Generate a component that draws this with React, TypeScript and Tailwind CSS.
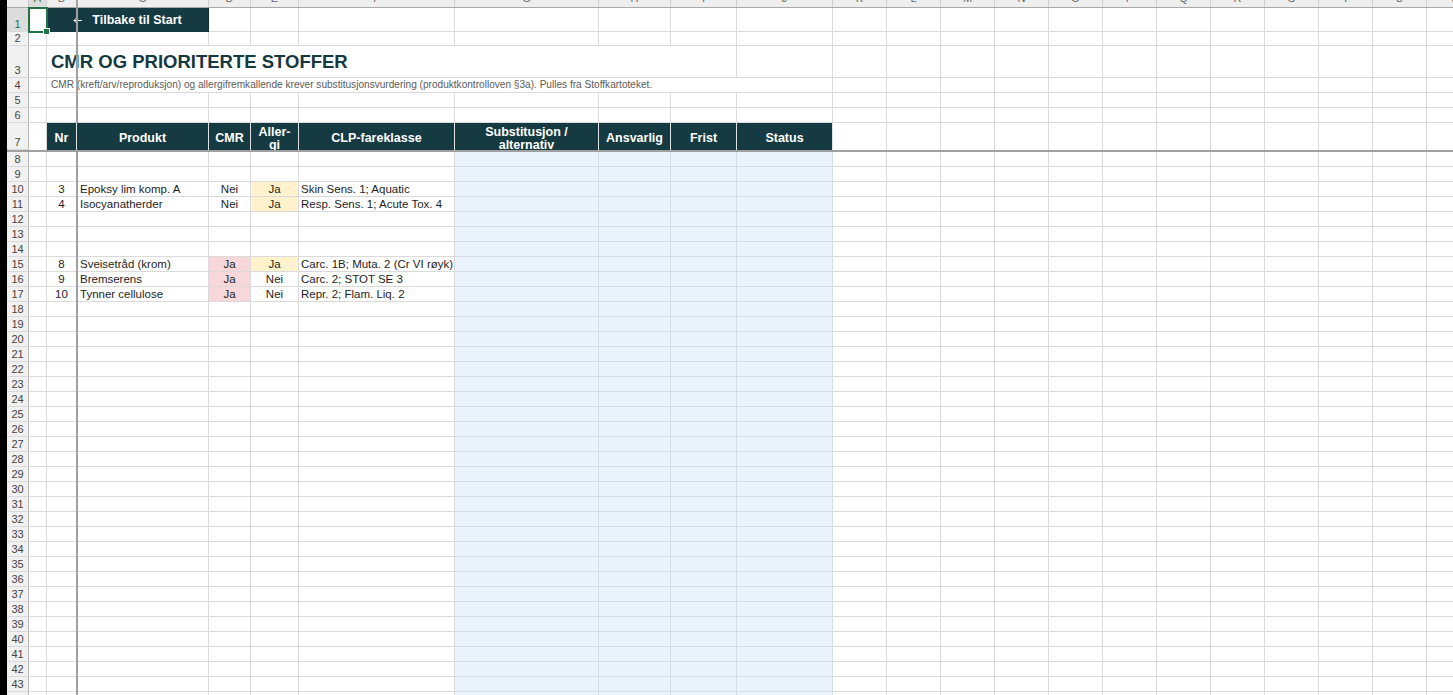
import React from 'react';
import clsx from 'clsx';

type Col = { k: string; w: string };

const MAIN: Col[] = [
  { k: 'A', w: 'w-[18px]' },
  { k: 'B', w: 'w-[30px]' },
  { k: 'C', w: 'w-[132px]' },
  { k: 'D', w: 'w-[42px]' },
  { k: 'E', w: 'w-[48px]' },
  { k: 'F', w: 'w-[156px]' },
  { k: 'G', w: 'w-[144px]' },
  { k: 'H', w: 'w-[72px]' },
  { k: 'I', w: 'w-[66px]' },
  { k: 'J', w: 'w-[96px]' },
];
const EXTRA: Col[] = ['K', 'L', 'M', 'N', 'O', 'P', 'Q', 'R', 'S', 'T', 'U', 'V'].map((k) => ({ k, w: 'w-[54px]' }));
const ALL = [...MAIN, ...EXTRA];
const BLUE = MAIN.slice(6);

type Item = { nr: number; produkt: string; cmr: boolean; allergi: boolean; clp: string };

const DATA: Record<number, Item> = {
  10: { nr: 3, produkt: 'Epoksy lim komp. A', cmr: false, allergi: true, clp: 'Skin Sens. 1; Aquatic' },
  11: { nr: 4, produkt: 'Isocyanatherder', cmr: false, allergi: true, clp: 'Resp. Sens. 1; Acute Tox. 4' },
  15: { nr: 8, produkt: 'Sveisetråd (krom)', cmr: true, allergi: true, clp: 'Carc. 1B; Muta. 2 (Cr VI røyk)' },
  16: { nr: 9, produkt: 'Bremserens', cmr: true, allergi: false, clp: 'Carc. 2; STOT SE 3' },
  17: { nr: 10, produkt: 'Tynner cellulose', cmr: true, allergi: false, clp: 'Repr. 2; Flam. Liq. 2' },
};

const HEADERS: { w: string; label: React.ReactNode }[] = [
  { w: 'w-[30px]', label: 'Nr' },
  { w: 'w-[132px]', label: 'Produkt' },
  { w: 'w-[42px]', label: 'CMR' },
  { w: 'w-[48px]', label: <>Aller-<br />gi</> },
  { w: 'w-[156px]', label: 'CLP-fareklasse' },
  { w: 'w-[144px]', label: <>Substitusjon /<br />alternativ</> },
  { w: 'w-[72px]', label: 'Ansvarlig' },
  { w: 'w-[66px]', label: 'Frist' },
  { w: 'w-[96px]', label: 'Status' },
];

const RowHead = ({ n, sel }: { n: number; sel?: boolean }) => (
  <div
    className={clsx(
      'w-[22px] shrink-0 h-full flex items-end justify-center border-r border-r-[#b9b9b9] border-b border-b-[#dadada] pb-[1px] text-[11px] leading-[12px]',
      sel ? 'bg-[#dcdcdc] text-[#217346]' : 'bg-[#f1f1f1] text-[#454545]'
    )}
  >
    {n}
  </div>
);

const Cell = ({ w, blue, className, children }: { w: string; blue?: boolean; className?: string; children?: React.ReactNode }) => (
  <div
    className={clsx(
      'h-full shrink-0 overflow-hidden border-r border-b',
      blue ? 'border-[#d3dde6] bg-[#eaf3fc]' : 'border-[#dadada]',
      w,
      className
    )}
  >
    {children}
  </div>
);

const Row = ({ n, h, sel, className, children }: { n: number; h: string; sel?: boolean; className?: string; children: React.ReactNode }) => (
  <div className={clsx('flex shrink-0', h, className)}>
    <RowHead n={n} sel={sel} />
    {children}
  </div>
);

const Empties = ({ cols }: { cols: Col[] }) => (
  <>
    {cols.map((c) => (
      <Cell key={c.k} w={c.w} />
    ))}
  </>
);

export default function App() {
  const dataRows = Array.from({ length: 37 }, (_, i) => i + 8);

  return (
    <div className="relative w-[1453px] h-[695px] overflow-hidden bg-white flex font-['Liberation_Sans',Arial,sans-serif]">
      <div className="w-[7px] shrink-0 bg-black" />

      <div className="flex flex-col shrink-0">
        {/* column letters (cut at top) */}
        <div className="flex h-[8px] shrink-0 border-b border-[#a8a8a8] bg-[#eeeeee] overflow-hidden">
          <div className="w-[22px] shrink-0 border-r border-[#c8c8c8]" />
          {ALL.map((c) => (
            <div
              key={c.k}
              className={clsx(
                'shrink-0 h-full flex items-end justify-center border-r border-[#d0d0d0] text-[11px] leading-[11px]',
                c.k === 'A' ? 'text-[#217346] bg-[#dcdcdc]' : 'text-[#6a6a6a]',
                c.w
              )}
            >
              <span className="mb-[3px]">{c.k}</span>
            </div>
          ))}
        </div>

        {/* row 1 */}
        <Row n={1} h="h-[24px]" sel>
          <div className="relative w-[18px] shrink-0 h-full border-r border-b border-[#dadada]">
            <div className="absolute -left-[1px] -top-[1px] w-[20px] h-[26px] border-2 border-[#217346] z-30" />
            <div className="absolute -right-[4px] -bottom-[4px] w-[7px] h-[7px] bg-[#217346] border border-white z-30" />
          </div>
          <div className="w-[162px] shrink-0 h-full bg-[#153a42] border-r border-[#0e2a30] flex items-center justify-center text-white font-bold text-[12.5px]">
            <svg width="9" height="7" viewBox="0 0 9 7" fill="none" stroke="white" strokeWidth="1">
              <path d="M9 3.5H1M3.5 1L1 3.5L3.5 6" />
            </svg>
            <span className="ml-[10px]">Tilbake til Start</span>
          </div>
          <Empties cols={MAIN.slice(3)} />
          <Empties cols={EXTRA} />
        </Row>

        {/* row 2 */}
        <Row n={2} h="h-[14px]">
          <Empties cols={ALL} />
        </Row>

        {/* row 3 title */}
        <Row n={3} h="h-[32px]">
          <Cell w="w-[18px]" />
          <Cell w="w-[690px]" className="flex items-center pl-[4px] pt-[2px]">
            <span className="whitespace-nowrap font-bold text-[18.5px] text-[#16393f] leading-none">CMR OG PRIORITERTE STOFFER</span>
          </Cell>
          <Cell w="w-[96px]" />
          <Empties cols={EXTRA} />
        </Row>

        {/* row 4 subtitle */}
        <Row n={4} h="h-[15px]">
          <Cell w="w-[18px]" />
          <Cell w="w-[786px]" className="flex items-center pl-[4px]">
            <span className="whitespace-nowrap text-[10.1px] text-[#5b5b5b]">
              CMR (kreft/arv/reproduksjon) og allergifremkallende krever substitusjonsvurdering (produktkontrolloven §3a). Pulles fra Stoffkartoteket.
            </span>
          </Cell>
          <Empties cols={EXTRA} />
        </Row>

        <Row n={5} h="h-[15px]">
          <Empties cols={ALL} />
        </Row>
        <Row n={6} h="h-[15px]">
          <Empties cols={ALL} />
        </Row>

        {/* row 7 table header */}
        <Row n={7} h="h-[29px]" className="relative z-20 border-b-2 border-[#a0a0a0]">
          <div className="w-[18px] shrink-0 h-full border-r border-[#dadada]" />
          {HEADERS.map((hd, i) => (
            <div
              key={i}
              className={clsx(
                'shrink-0 h-full overflow-hidden bg-[#153a42] border-r border-[#dde3e5] flex flex-col items-center justify-center pt-[4px] text-center text-white font-bold text-[12.5px] leading-[13px]',
                hd.w
              )}
            >
              <div>{hd.label}</div>
            </div>
          ))}
          {EXTRA.map((c) => (
            <div key={c.k} className={clsx('shrink-0 h-full border-r border-[#dadada]', c.w)} />
          ))}
        </Row>

        {/* data rows */}
        {dataRows.map((r) => {
          const d = DATA[r];
          return (
            <Row key={r} n={r} h="h-[15px]">
              <Cell w="w-[18px]" />
              <Cell w="w-[30px]" className="flex items-center justify-center pt-[1px] text-[11.5px] text-[#1e1e1e]">
                {d?.nr}
              </Cell>
              <Cell w="w-[132px]" className="flex items-center pl-[3px] pt-[1px] whitespace-nowrap text-[11.5px] text-[#1e1e1e]">
                {d?.produkt}
              </Cell>
              <Cell w="w-[42px]" className={clsx('flex items-center justify-center pt-[1px] text-[11.5px] text-[#1e1e1e]', d?.cmr && 'bg-[#f8d7da]')}>
                {d ? (d.cmr ? 'Ja' : 'Nei') : null}
              </Cell>
              <Cell w="w-[48px]" className={clsx('flex items-center justify-center pt-[1px] text-[11.5px] text-[#1e1e1e]', d?.allergi && 'bg-[#fff2cc]')}>
                {d ? (d.allergi ? 'Ja' : 'Nei') : null}
              </Cell>
              <Cell w="w-[156px]" className="flex items-center pl-[2px] pt-[1px] whitespace-nowrap text-[11.5px] text-[#1e1e1e]">
                {d?.clp}
              </Cell>
              {BLUE.map((c) => (
                <Cell key={c.k} w={c.w} blue />
              ))}
              <Empties cols={EXTRA} />
            </Row>
          );
        })}
      </div>

      {/* frozen pane divider */}
      <div className="absolute left-[76px] top-0 bottom-0 w-[2px] bg-[#a0a0a0] z-10" />
    </div>
  );
}
